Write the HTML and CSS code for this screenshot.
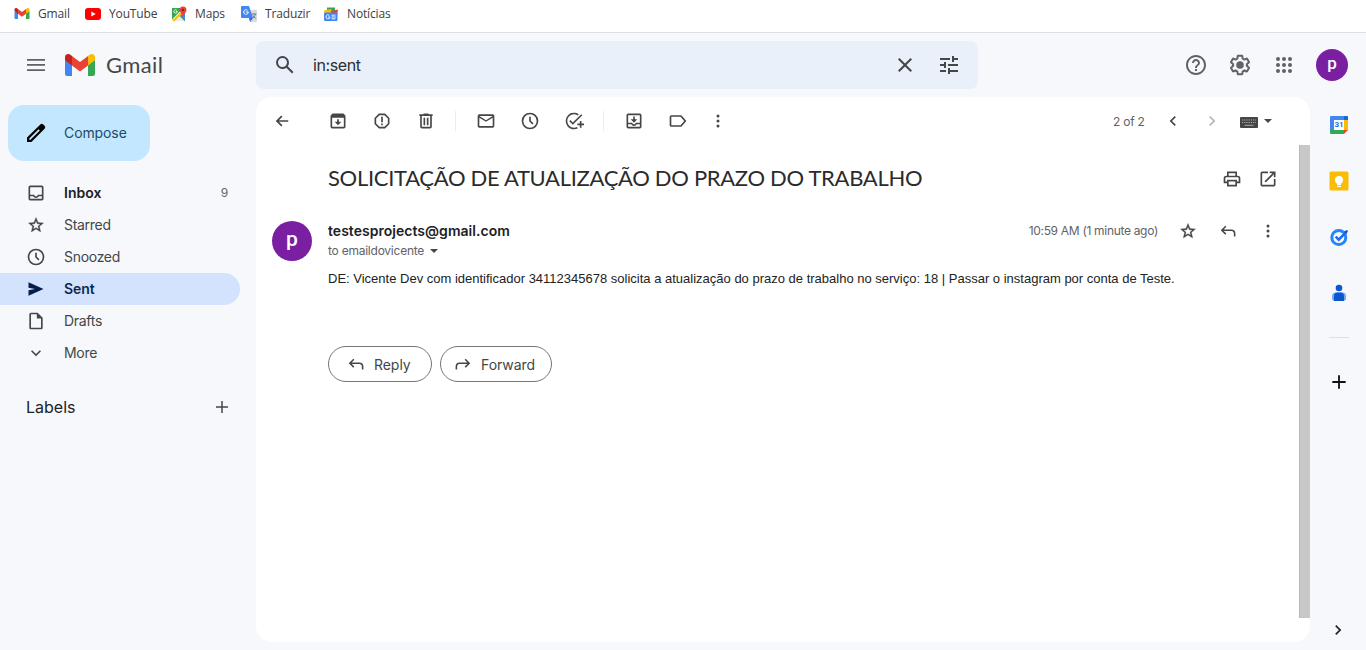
FILE: index.html
```html
<!DOCTYPE html>
<html lang="pt">
<head>
<meta charset="utf-8">
<title>Gmail</title>
<link rel="stylesheet" href="styles.css">
</head>
<body>
<svg class="sprite" aria-hidden="true">
  <symbol id="gmail" viewBox="0 0 30 22"><path fill="#4285f4" d="M0 6v14a2 2 0 0 0 2 2h5V10z"/><path fill="#34a853" d="M30 6v14a2 2 0 0 1-2 2h-5V10z"/><path fill="#ea4335" d="M7 11.4V2l8 6 8-6v9.4l-8 6z"/><path fill="#c5221f" d="M0 3v3.2l7 5.2V2L5.4.8C3.2-.9 0 .5 0 3z"/><path fill="#fbbc04" d="M30 3v3.2l-7 5.2V2L24.600.8C26.800-.9 30 .5 30 3z"/></symbol>
  <symbol id="youtube" viewBox="0 0 16 12"><rect width="16" height="12" rx="3" fill="#f00"/><path d="M6.300 3.500v5L10.700 6z" fill="#fff"/></symbol>
  <symbol id="maps" viewBox="0 0 16 16"><path d="M1 2h13v13H1z" fill="#34a853"/><path d="M14 7v8L8.500 8.500z" fill="#4285f4"/><path d="M2 15 7.800 9.200 13.500 15z" fill="#e8e8e8"/><path d="M1 13.500 11.500 3l2 2L3.500 15H1z" fill="#fff"/><path d="m1.500 14.200 7.500-7.500 1.500 1.500-6.800 6.800H1.500z" fill="#fbbc04"/><path d="M12 .5A3.500 3.500 0 0 0 8.500 4C8.500 6.500 12 8.500 12 12c0-3.500 3.500-5.500 3.500-8A3.500 3.500 0 0 0 12 .5z" fill="#ea4335"/><circle cx="12" cy="4" r="1.200" fill="#8c1d18"/><path d="M6.500 5.500H4.800m1.500 0A1.700 1.700 0 1 1 5.800 4.200" stroke="#fff" stroke-width=".8" fill="none"/></symbol>
  <symbol id="translate" viewBox="0 0 16 16"><path d="M6 4h9a1 1 0 0 1 1 1v10a1 1 0 0 1-1 1H9z" fill="#d7dade"/><path d="M1 0h7l4 12H1a1 1 0 0 1-1-1V1a1 1 0 0 1 1-1z" fill="#4285f4"/><path d="m8 12 4 0-3 4z" fill="#3367d6"/><path d="M7.300 6H4.900m2.400 0A2.300 2.300 0 1 1 6.500 4.300" stroke="#fff" fill="none"/><path d="M10.500 8h5m-2.500-1v1m1.500 0q-.5 3-3 4.200m.3-3q1 2.500 3 3.200" stroke="#607080" stroke-width=".8" fill="none"/></symbol>
  <symbol id="news" viewBox="0 0 16 16"><path d="M4 1.500h8V7H4z" fill="#34a853"/><path d="M1 4.500 8 3l2 6H2z" fill="#fbbc04"/><path d="m8 5 7-1.500L14 10H7z" fill="#ea4335"/><rect x="1" y="6.500" width="13.500" height="8.500" rx="1.200" fill="#4285f4"/><path d="M7 11H5.200M7 11A2 2 0 1 1 6.300 9.300M8.500 9.200h4m-4 1.800h4.300m-4.300 1.800h4" stroke="#fff" stroke-width=".9" fill="none"/></symbol>
  <symbol id="menu" viewBox="0 0 24 24"><path d="M3 18h18v-1.700H3zm0-5.200h18v-1.700H3zM3 6v1.700h18V6z"/></symbol>
  <symbol id="search" viewBox="0 0 24 24"><path d="M20.490 19l-5.730-5.730C15.530 12.200 16 10.910 16 9.500A6.500 6.500 0 1 0 9.500 16c1.410 0 2.700-.47 3.770-1.240L19 20.490 20.490 19zM5 9.500C5 7.010 7.010 5 9.500 5S14 7.010 14 9.500 11.990 14 9.500 14 5 11.990 5 9.500z"/></symbol>
  <symbol id="close" viewBox="0 0 24 24"><path d="M19 6.410 17.590 5 12 10.590 6.410 5 5 6.410 10.590 12 5 17.590 6.410 19 12 13.410 17.590 19 19 17.590 13.410 12z"/></symbol>
  <symbol id="tune" viewBox="0 0 24 24"><path d="M3 17v2h6v-2H3zM3 5v2h10V5H3zm10 16v-2h8v-2h-8v-2h-2v6h2zM7 9v2H3v2h4v2h2V9H7zm14 4v-2H11v2h10zm-6-4h2V7h4V5h-4V3h-2v6z"/></symbol>
  <symbol id="help" viewBox="0 0 24 24"><path d="M11 18h2v-2h-2v2zm1-16C6.480 2 2 6.480 2 12s4.480 10 10 10 10-4.480 10-10S17.520 2 12 2zm0 18c-4.410 0-8-3.590-8-8s3.590-8 8-8 8 3.590 8 8-3.590 8-8 8zm0-14c-2.210 0-4 1.790-4 4h2c0-1.100.9-2 2-2s2 .9 2 2c0 2-3 1.750-3 5h2c0-2.250 3-2.500 3-5 0-2.210-1.790-4-4-4z"/></symbol>
  <symbol id="gear" viewBox="0 0 24 24"><path d="M13.850 22.250h-3.700c-.74 0-1.360-.54-1.450-1.270l-.27-1.890c-.27-.14-.53-.29-.79-.46l-1.800.72c-.7.26-1.470-.03-1.810-.65L2.200 15.530c-.35-.66-.2-1.440.36-1.880l1.530-1.190c-.01-.15-.02-.3-.02-.46s.01-.31.020-.46l-1.520-1.190c-.59-.45-.74-1.260-.37-1.880l1.850-3.190c.34-.62 1.110-.9 1.790-.63l1.810.73c.26-.17.52-.32.78-.46l.27-1.910c.09-.7.710-1.250 1.440-1.250h3.700c.74 0 1.360.54 1.450 1.270l.27 1.890c.27.140.53.290.79.460l1.800-.72c.71-.26 1.480.03 1.820.65l1.840 3.180c.36.660.2 1.440-.36 1.880l-1.520 1.190c.01.150.020.3.020.460s-.01.310-.02.460l1.520 1.190c.56.450.72 1.230.37 1.860l-1.860 3.220c-.34.620-1.110.9-1.800.63l-1.800-.72c-.26.170-.52.320-.78.460l-.27 1.910c-.1.680-.72 1.220-1.460 1.220zm-3.230-2h2.760l.37-2.550.53-.22c.44-.18.880-.44 1.340-.78l.45-.34 2.380.96 1.380-2.400-2.030-1.580.07-.56c.03-.26.060-.51.060-.78s-.03-.53-.06-.78l-.07-.56 2.030-1.580-1.390-2.400-2.390.96-.45-.35c-.42-.32-.87-.58-1.330-.77l-.52-.22-.37-2.550h-2.760l-.37 2.550-.53.210c-.44.190-.88.440-1.340.79l-.45.330-2.380-.95-1.390 2.390 2.030 1.580-.07.560a7 7 0 0 0 0 1.580l.07.560-2.030 1.580 1.380 2.400 2.390-.96.450.350c.43.330.86.580 1.330.77l.53.220z"/><circle cx="12" cy="12" r="3.800"/></symbol>
  <symbol id="apps" viewBox="0 0 24 24"><circle cx="6" cy="6" r="2"/><circle cx="12" cy="6" r="2"/><circle cx="18" cy="6" r="2"/><circle cx="6" cy="12" r="2"/><circle cx="12" cy="12" r="2"/><circle cx="18" cy="12" r="2"/><circle cx="6" cy="18" r="2"/><circle cx="12" cy="18" r="2"/><circle cx="18" cy="18" r="2"/></symbol>
  <symbol id="pencil" viewBox="0 0 24 24"><path fill-rule="evenodd" d="M20.600 4.800 19.200 3.400a2 2 0 0 0-2.900 0L3 16.600V21h4.400L20.600 7.700c.8-.8.800-2.100 0-2.900zM6.500 18.700H5.300v-1.200L14.600 8.200l1.200 1.200z"/></symbol>
  <symbol id="inbox" viewBox="0 0 24 24"><path d="M19 3H5c-1.100 0-2 .9-2 2v14a2 2 0 0 0 2 2h14c1.100 0 2-.9 2-2V5c0-1.100-.9-2-2-2zm0 16H5v-3h3.560c.69 1.190 1.970 2 3.450 2s2.750-.81 3.450-2H19v3zm0-5h-4.990c0 1.100-.9 2-2 2s-2-.9-2-2H5V5h14v9z"/></symbol>
  <symbol id="star" viewBox="0 0 24 24"><path stroke="#444746" stroke-width=".4" d="m21 9.600-6.500-.6L12 3 9.500 9l-6.500.6 4.900 4.200L6.400 20.300 12 16.900l5.600 3.400-1.500-6.500L21 9.600zM12 15.200l-3.300 2 .9-3.800-2.900-2.500 3.800-.3L12 7l1.500 3.600 3.800.3-2.900 2.500.9 3.800L12 15.200z"/></symbol>
  <symbol id="clock" viewBox="0 0 24 24"><path d="M12 2a10 10 0 1 0 0 20 10 10 0 0 0 0-20zm0 18a8 8 0 1 1 0-16 8 8 0 0 1 0 16zM13 7h-2v5.410l3.800 3.800 1.400-1.410-3.200-3.210z"/></symbol>
  <symbol id="send" viewBox="0 0 24 24"><path d="M3 4v6.500l8 1.500-8 1.500V20l18-8z"/></symbol>
  <symbol id="draft" viewBox="0 0 24 24"><path d="M14 2H6c-1.100 0-2 .9-2 2v16c0 1.100.9 2 2 2h12c1.100 0 2-.9 2-2V8l-6-6zM6 20V4h7v5h5v11H6z"/></symbol>
  <symbol id="down" viewBox="0 0 24 24"><path d="m7.400 8.600 4.600 4.600 4.600-4.600L18 10l-6 6-6-6z"/></symbol>
  <symbol id="left" viewBox="0 0 24 24"><path d="M15.400 7.400 14 6l-6 6 6 6 1.400-1.400-4.600-4.600z"/></symbol>
  <symbol id="right" viewBox="0 0 24 24"><path d="M10 6 8.600 7.400l4.600 4.600-4.600 4.600L10 18l6-6z"/></symbol>
  <symbol id="plus" viewBox="0 0 24 24"><path d="M19.200 12.900h-6.300v6.300h-1.800v-6.300H4.800v-1.800h6.300V4.800h1.800v6.300h6.300z"/></symbol>
  <symbol id="plus-bold" viewBox="0 0 24 24"><path d="M20 13.100h-6.900V20h-2.200v-6.900H4v-2.200h6.900V4h2.200v6.900H20z"/></symbol>
  <symbol id="back" viewBox="0 0 24 24"><path d="M19.500 11H8.300l4.200-4.200-1.400-1.400L4.500 12l6.600 6.600 1.400-1.400L8.300 13h11.200z"/></symbol>
  <symbol id="archive" viewBox="0 0 24 24"><path d="m20.540 5.230-1.390-1.680C18.880 3.210 18.470 3 18 3H6c-.47 0-.88.210-1.160.550L3.460 5.230C3.170 5.570 3 6.020 3 6.500V19a2 2 0 0 0 2 2h14a2 2 0 0 0 2-2V6.500c0-.48-.17-.93-.46-1.270zM5 19V8h14v11zM13 10v3h3l-4 4-4-4h3v-3z"/></symbol>
  <symbol id="spam" viewBox="0 0 24 24"><path d="M15.700 3H8.300L3 8.300v7.400L8.300 21h7.400l5.300-5.300V8.300zM19 14.900 14.900 19H9.100L5 14.900V9.100L9.100 5h5.800L19 9.100zM11 7h2v6.500h-2zm0 8h2v2h-2z"/></symbol>
  <symbol id="trash" viewBox="0 0 24 24"><path d="M15 4V3H9v1H4v2h1v13a2 2 0 0 0 2 2h10a2 2 0 0 0 2-2V6h1V4zm2 15H7V6h10zM9 8h2v9H9zm4 0h2v9h-2z"/></symbol>
  <symbol id="mail" viewBox="0 0 24 24"><path d="M20 4H4a2 2 0 0 0-2 2v12a2 2 0 0 0 2 2h16a2 2 0 0 0 2-2V6a2 2 0 0 0-2-2zm0 14H4V8l8 5 8-5zm-8-7L4 6h16z"/></symbol>
  <symbol id="task" viewBox="0 0 24 24"><path d="M22 5.200 10.600 16.600l-4.300-4.300 1.400-1.400 2.900 2.900L20.600 3.800zM12 20c-4.400 0-8-3.600-8-8s3.600-8 8-8c1.600 0 3 .5 4.300 1.300l1.500-1.500A10 10 0 1 0 12 22c1.700 0 3.300-.4 4.800-1.200l-1.500-1.500c-1 .5-2.100.7-3.300.7zm7-5h-3v2h3v3h2v-3h3v-2h-3v-3h-2z"/></symbol>
  <symbol id="move" viewBox="0 0 24 24"><path d="M19 3H5a2 2 0 0 0-2 2v14a2 2 0 0 0 2 2h14a2 2 0 0 0 2-2V5a2 2 0 0 0-2-2zm0 16H5v-3h3.600a4 4 0 0 0 6.800 0H19zm0-5h-5a2 2 0 0 1-4 0H5V5h14zm-3-4h-3V6.500h-2V10H8l4 4z"/></symbol>
  <symbol id="label" viewBox="0 0 24 24"><path d="M16.600 5.800C16.300 5.300 15.700 5 15 5H4a2 2 0 0 0-2 2v10a2 2 0 0 0 2 2h11c.7 0 1.300-.3 1.600-.8L22 12zM15 17H4V7h11l4.500 5z"/></symbol>
  <symbol id="dots" viewBox="0 0 24 24"><circle cx="12" cy="6" r="1.800"/><circle cx="12" cy="12" r="1.800"/><circle cx="12" cy="18" r="1.800"/></symbol>
  <symbol id="keyboard" viewBox="0 0 18 11"><rect width="18" height="11" rx="1"/><path d="M2 3h14M2 5.500h14" stroke="#aaa" stroke-width="1" stroke-dasharray="1.200 1"/><path d="M4.500 8.300h9" stroke="#aaa"/></symbol>
  <symbol id="caret" viewBox="0 0 8 4"><path d="M0 0h8L4 4z"/></symbol>
  <symbol id="print" viewBox="0 0 24 24"><path d="M19 8h-1V3H6v5H5a3 3 0 0 0-3 3v6h4v4h12v-4h4v-6a3 3 0 0 0-3-3zM8 5h8v3H8zm8 14H8v-4h8zm4-4h-2v-2H6v2H4v-4a1 1 0 0 1 1-1h14a1 1 0 0 1 1 1z"/></symbol>
  <symbol id="open" viewBox="0 0 24 24"><path d="M19 19H5V5h7V3H5a2 2 0 0 0-2 2v14a2 2 0 0 0 2 2h14a2 2 0 0 0 2-2v-7h-2zM14 3v2h3.600l-9.800 9.800 1.400 1.400L19 6.400V10h2V3z"/></symbol>
  <symbol id="reply" viewBox="0 0 24 24"><path d="M8.700 5.600 3.300 11l5.400 5.400 1.300-1.300-3.200-3.200H16a3 3 0 0 1 3 3v3.600h1.900v-3.600a4.900 4.900 0 0 0-4.900-4.800H6.800L10 6.900z"/></symbol>
  <symbol id="calendar" viewBox="0 0 20 20"><path d="M2 1h14v4H1V2a1 1 0 0 1 1-1z" fill="#4285f4"/><path d="M1 5h4v10H1z" fill="#4285f4"/><path d="M1 15h14v4H2a1 1 0 0 1-1-1z" fill="#34a853"/><path d="M15 5h4v10h-4z" fill="#fbbc04"/><path d="M15 1h3a1 1 0 0 1 1 1v3h-4z" fill="#1967d2"/><path d="M15 15h4l-4 4z" fill="#ea4335"/><path d="M5 5h10v10H5z" fill="#fff"/></symbol>
  <symbol id="keep" viewBox="0 0 20 20"><rect x=".5" y=".5" width="19" height="19" rx="1.500" fill="#fbbc04"/><circle cx="10" cy="9" r="4" fill="#fff"/><path d="M8 12h4v2H8zm0 2.700h4V16H8z" fill="#fff"/></symbol>
  <symbol id="tasks" viewBox="0 0 20 20"><circle cx="9.800" cy="10.500" r="7" fill="none" stroke="#2684fc" stroke-width="3"/><path d="m6.700 9.700 3 3 7-7" fill="none" stroke="#1a6ee8" stroke-width="2.600"/><path d="m15 4.500 3-1.500 1 1-1.500 3z" fill="#0b57d0"/></symbol>
  <symbol id="contact" viewBox="0 0 20 20"><circle cx="10" cy="5" r="3.300" fill="#0b57d0"/><path d="M7 9.500h6.500a3.500 3.500 0 0 1 3.500 3.500v3.500l-2 1.500H5l-2-1.500V13a4 4 0 0 1 4-3.500z" fill="#76a7fa"/><path d="M8.500 9.500h3A3.500 3.500 0 0 1 15 13v5H5v-5a3.500 3.500 0 0 1 3.500-3.500z" fill="#0b57d0"/></symbol>
</svg>

<nav class="bookmarks">
  <a class="bookmark bm-gmail"><svg class="fav fav-gmail"><use href="#gmail"/></svg>Gmail</a>
  <a class="bookmark bm-youtube"><svg class="fav fav-youtube"><use href="#youtube"/></svg>YouTube</a>
  <a class="bookmark bm-maps"><svg class="fav"><use href="#maps"/></svg>Maps</a>
  <a class="bookmark bm-translate"><svg class="fav"><use href="#translate"/></svg>Traduzir</a>
  <a class="bookmark"><svg class="fav"><use href="#news"/></svg>Notícias</a>
</nav>

<header class="header">
  <div class="brand"><svg class="i24 menu"><use href="#menu"/></svg><svg class="logo"><use href="#gmail"/></svg><span class="brand-name">Gmail</span></div>
  <div class="search"><svg class="i24"><use href="#search"/></svg><span class="query">in:sent</span><svg class="i24"><use href="#close"/></svg><svg class="i24"><use href="#tune"/></svg></div>
  <div class="account"><svg class="i24"><use href="#help"/></svg><svg class="i24"><use href="#gear"/></svg><svg class="i24"><use href="#apps"/></svg><span class="avatar avatar-small">p</span></div>
</header>

<div class="layout">
  <aside class="sidebar">
    <button class="compose"><svg class="i24"><use href="#pencil"/></svg><span class="text">Compose</span></button>
    <ul class="folders">
      <li class="folder unread"><svg class="i20"><use href="#inbox"/></svg><span class="text inbox-name">Inbox</span><span class="text count">9</span></li>
      <li class="folder"><svg class="i20"><use href="#star"/></svg><span class="text">Starred</span></li>
      <li class="folder"><svg class="i20"><use href="#clock"/></svg><span class="text">Snoozed</span></li>
      <li class="folder active"><svg class="i20"><use href="#send"/></svg><span class="text">Sent</span></li>
      <li class="folder"><svg class="i20"><use href="#draft"/></svg><span class="text">Drafts</span></li>
      <li class="folder"><svg class="i20"><use href="#down"/></svg><span class="text">More</span></li>
    </ul>
    <div class="labels"><span class="text">Labels</span><svg class="i20"><use href="#plus"/></svg></div>
  </aside>

  <main class="panel">
    <div class="toolbar">
      <svg class="i20 tool-back"><use href="#back"/></svg>
      <div class="tools"><svg class="i20"><use href="#archive"/></svg><svg class="i20"><use href="#spam"/></svg><svg class="i20"><use href="#trash"/></svg></div>
      <div class="tools divided"><svg class="i20"><use href="#mail"/></svg><svg class="i20"><use href="#clock"/></svg><svg class="i20"><use href="#task"/></svg></div>
      <div class="tools divided"><svg class="i20"><use href="#move"/></svg><svg class="i20"><use href="#label"/></svg></div>
      <svg class="i20 tool-more"><use href="#dots"/></svg>
      <div class="pager"><span class="position">2 of 2</span><svg class="i20"><use href="#left"/></svg><svg class="i20 disabled"><use href="#right"/></svg><svg class="keyboard"><use href="#keyboard"/></svg><svg class="caret"><use href="#caret"/></svg></div>
    </div>
    <div class="content">
      <div class="thread">
        <div class="subject-row"><h1 class="subject">SOLICITAÇÃO DE ATUALIZAÇÃO DO PRAZO DO TRABALHO</h1><svg class="i20"><use href="#print"/></svg><svg class="i20"><use href="#open"/></svg></div>
        <article class="message">
          <span class="avatar">p</span>
          <div class="message-main">
            <div class="sender-row"><strong class="text sender">testesprojects@gmail.com</strong><span class="text time">10:59 AM (1 minute ago)</span><svg class="i20"><use href="#star"/></svg><svg class="i20"><use href="#reply"/></svg><svg class="i20"><use href="#dots"/></svg></div>
            <div class="recipient"><span class="text">to emaildovicente</span><svg class="caret"><use href="#caret"/></svg></div>
            <p class="body-text">DE: Vicente Dev com identificador 34112345678 solicita a atualização do prazo de trabalho no serviço: 18 | Passar o instagram por conta de Teste.</p>
            <div class="actions"><button class="action reply"><svg class="i20"><use href="#reply"/></svg><span>Reply</span></button><button class="action forward"><svg class="i20 flip"><use href="#reply"/></svg><span>Forward</span></button></div>
          </div>
        </article>
      </div>
      <div class="scrollbar"></div>
    </div>
  </main>

  <aside class="addons">
    <div class="calendar"><svg class="i20"><use href="#calendar"/></svg><span class="day">31</span></div>
    <svg class="i20"><use href="#keep"/></svg>
    <svg class="i20"><use href="#tasks"/></svg>
    <svg class="i20"><use href="#contact"/></svg>
    <hr class="rule">
    <svg class="i20 add"><use href="#plus-bold"/></svg>
    <svg class="i20 collapse"><use href="#right"/></svg>
  </aside>
</div>
</body>
</html>
```

FILE: styles.css
```css
* { box-sizing: border-box; }
body {
  margin: 0;
  width: 1366px;
  height: 650px;
  overflow: hidden;
  display: flex;
  flex-direction: column;
  background: #f6f8fc;
  color: #202124;
  font-family: Inter, "Noto Sans", sans-serif;
}
.sprite { display: none; }
svg { display: block; flex: none; fill: #444746; }
button { font: inherit; border: 0; padding: 0; }
.i20 { width: 20px; height: 20px; }
.i24 { width: 24px; height: 24px; }
.text { padding-bottom: 1px; }

/* Bookmarks bar */
.bookmarks {
  height: 33px;
  padding: 0 0 5px 14px;
  display: flex;
  align-items: center;
  background: #fff;
  border-bottom: 1px solid #dcdee1;
  font: 12px "Open Sans", sans-serif;
  color: #3c4043;
}
.bookmark { display: flex; align-items: center; gap: 8px; letter-spacing: -.15px; }
.fav { width: 16px; height: 16px; }
.fav-gmail { width: 16px; height: 11px; }
.fav-youtube { width: 16px; height: 12px; }
.bm-gmail { width: 71px; }
.bm-youtube { width: 86px; }
.bm-maps { width: 70px; }
.bm-translate { width: 82px; }

/* Header */
.header { height: 64px; display: flex; align-items: center; }
.brand { width: 256px; padding-left: 24px; display: flex; align-items: center; }
.menu { fill: #5f6368; }
.logo { width: 30px; height: 22px; margin-left: 17px; }
.brand-name { margin-left: 11px; padding-bottom: 2px; font: 22px Lato, sans-serif; color: #444746; letter-spacing: .4px; }
.search {
  width: 722px;
  height: 48px;
  padding: 0 17px;
  display: flex;
  align-items: center;
  gap: 20px;
  border-radius: 8px;
  background: #e9f0fa;
}
.query { flex: 1; margin-left: -4px; font-size: 16px; letter-spacing: -.4px; color: #2c2f33; }
.account { margin-left: auto; padding-right: 18px; display: flex; align-items: center; gap: 20px; }
.account svg { fill: #5f6368; }
.avatar {
  width: 40px;
  height: 40px;
  flex: none;
  display: flex;
  align-items: center;
  justify-content: center;
  border-radius: 50%;
  background: #7b1fa2;
  color: #fff;
  font: 500 21px/1 Roboto, sans-serif;
  padding-bottom: 3px;
}
.avatar-small { width: 32px; height: 32px; font-size: 17px; }

/* Sidebar */
.layout { height: 545px; display: flex; }
.sidebar { width: 256px; padding-top: 8px; font-size: 14px; color: #444746; }
.compose {
  width: 142px;
  height: 56px;
  margin-left: 8px;
  padding-left: 16px;
  display: flex;
  align-items: center;
  gap: 16px;
  border-radius: 16px;
  background: #c2e7ff;
  color: #234a68;
  letter-spacing: -.1px;
}
.compose svg { fill: #000; }
.folders { list-style: none; margin: 16px 16px 0 0; padding: 0; }
.folder {
  height: 32px;
  padding: 0 12px 0 26px;
  display: flex;
  align-items: center;
  gap: 18px;
  border-radius: 0 16px 16px 0;
  letter-spacing: -.3px;
}
.unread, .active { font-weight: 600; }
.unread { color: #202124; }
.inbox-name { letter-spacing: 0; }
.active { background: #d3e3fd; color: #0b2a52; letter-spacing: -.1px; }
.active svg { fill: #041e49; }
.count { margin-left: auto; font-size: 12px; font-weight: 400; color: #5f6368; }
.labels {
  margin-top: 28px;
  padding: 0 24px 0 26px;
  height: 20px;
  display: flex;
  justify-content: space-between;
  align-items: center;
  font-size: 16px;
  color: #202124;
}

/* Message panel */
.panel { width: 1054px; border-radius: 16px; background: #fff; overflow: hidden; }
.toolbar { height: 48px; padding-left: 16px; display: flex; align-items: center; }
.tools { display: flex; align-items: center; gap: 24px; }
.tool-back { margin-right: 36px; }
.divided { margin-left: 19px; padding-left: 20px; border-left: 1px solid #eceded; }
.tool-more { margin-left: 20px; }
.pager { margin-left: auto; padding-right: 38px; display: flex; align-items: center; }
.position { width: 50px; padding-top: 1px; font-size: 12px; letter-spacing: -.25px; color: #5f6368; }
.pager .i20 { margin-right: 19px; }
.pager .disabled { margin-right: 18px; fill: #b4b6b9; }
.keyboard { width: 18px; height: 11px; margin-top: 3px; }
.caret { width: 8px; height: 4px; }
.pager .caret { margin-left: 6px; }
.content { height: 497px; display: flex; }
.thread { width: 1043px; padding: 20px 21px 0 16px; }
.subject-row { height: 28px; padding-left: 56px; display: flex; align-items: center; gap: 16px; }
.subject { flex: 1; margin: 0; padding-bottom: 2px; font: 22px/28px Lato, sans-serif; letter-spacing: -.31px; color: #2b2b2b; white-space: nowrap; }
.message { margin-top: 28px; display: flex; gap: 16px; }
.message-main { flex: 1; }
.sender-row { height: 20px; display: flex; align-items: center; gap: 20px; }
.sender { font-size: 14px; font-weight: 600; letter-spacing: .03px; }
.time { margin-left: auto; font-size: 12px; letter-spacing: -.31px; color: #5f6368; }
.recipient { height: 20px; display: flex; align-items: center; gap: 6px; font-size: 12px; letter-spacing: -.24px; color: #5f6368; }
.body-text { margin: 8px 0 0; font: 13px/20px "Liberation Sans", Arial, sans-serif; color: #222; white-space: nowrap; }
.actions { margin-top: 57px; display: flex; gap: 8px; }
.action {
  height: 36px;
  padding-left: 17px;
  display: flex;
  align-items: center;
  gap: 8px;
  border: 1px solid #747775;
  border-radius: 18px;
  background: #fff;
  color: #444746;
  font-size: 14px;
  letter-spacing: -.05px;
}
.reply { width: 104px; }
.forward { width: 112px; padding-left: 12px; }
.flip { transform: scaleX(-1); }
.scrollbar { width: 11px; height: 473px; background: #c8c8c8; border-left: 1px solid #b8b8b8; }

/* Add-ons rail */
.addons { width: 56px; padding: 18px 0 0 2px; display: flex; flex-direction: column; align-items: center; gap: 36px; }
.calendar { position: relative; }
.day { position: absolute; inset: 0; text-align: center; font: bold 8px/20px Roboto, sans-serif; color: #1a73e8; }
.rule { width: 20px; margin: -2px 0 0; border: 0; border-top: 1px solid #dfe1e5; }
.add { fill: #111; margin-top: -2px; }
.collapse { fill: #202124; margin: auto 2px 2px 0; }
```
